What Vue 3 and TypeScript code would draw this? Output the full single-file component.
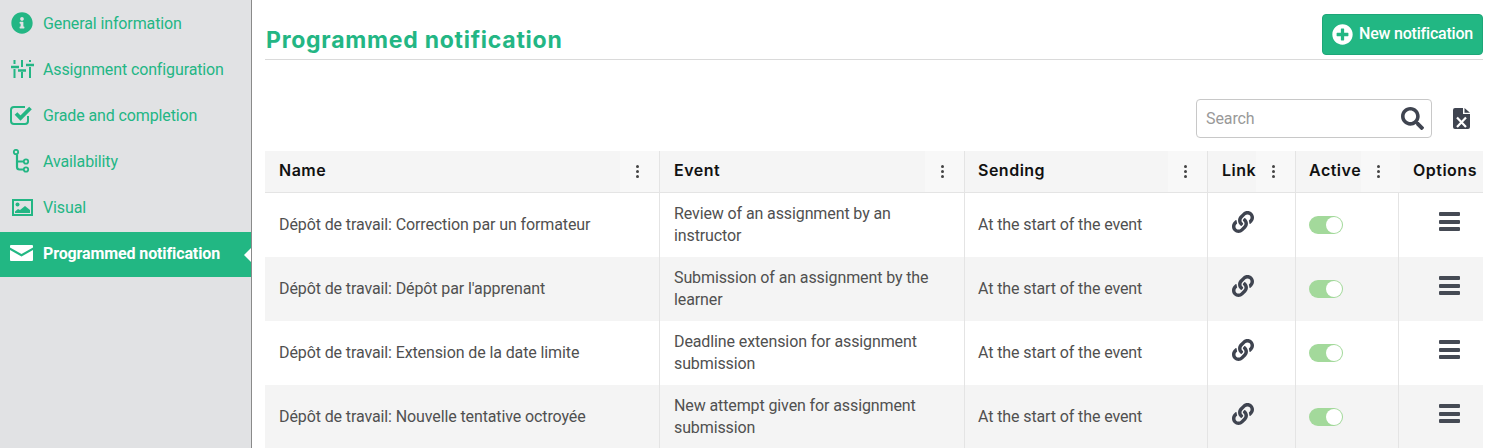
<template>
  <div class="page">
    <aside class="sidebar">
      <a v-for="item in menu" :key="item.label" class="nav-item" :class="{ active: item.active }">
        <span class="nav-icon">
          <svg v-if="item.icon === 'info'" width="22" height="22" viewBox="0 0 512 512"><path fill="currentColor" d="M256 8C119.043 8 8 119.083 8 256c0 136.997 111.043 248 248 248s248-111.003 248-248C504 119.083 392.957 8 256 8zm0 110c23.196 0 42 18.804 42 42s-18.804 42-42 42-42-18.804-42-42 18.804-42 42-42zm56 254c0 6.627-5.373 12-12 12h-88c-6.627 0-12-5.373-12-12v-24c0-6.627 5.373-12 12-12h12v-64h-12c-6.627 0-12-5.373-12-12v-24c0-6.627 5.373-12 12-12h64c6.627 0 12 5.373 12 12v100h12c6.627 0 12 5.373 12 12v24z" /></svg>
          <svg v-else-if="item.icon === 'sliders'" width="24" height="18" viewBox="0 0 24 18" fill="none" stroke="currentColor"><path stroke-width="2" d="M3.5 0v4M3.5 9v9M11 0v7M11 12v6M19 0v2M19 7v11" /><path stroke-width="2.5" d="M0 7h8M7 10.5h8M15 5h8" /></svg>
          <svg v-else-if="item.icon === 'check'" class="shift-left" width="23" height="20" viewBox="0 0 23 20" fill="none" stroke="currentColor"><path stroke-width="2" d="M18 11v5a3 3 0 0 1-3 3H4a3 3 0 0 1-3-3V5a3 3 0 0 1 3-3h11" /><path stroke-width="3.8" d="M6 8.5l4.5 4.5 10-10" /></svg>
          <svg v-else-if="item.icon === 'branch'" class="shift-right" width="18" height="24" viewBox="0 0 18 24" fill="none" stroke="currentColor"><g stroke-width="1.8"><circle cx="4" cy="3" r="2.2" /><circle cx="14" cy="12.5" r="2.2" /><circle cx="14" cy="20.5" r="2.2" /></g><path stroke-width="2.2" d="M5 5.5v12.500a2.5 2.5 0 0 0 2.5 2.5h4M5 12.5h6.500" /></svg>
          <svg v-else-if="item.icon === 'image'" class="shift-right" width="21" height="17" viewBox="0 0 21 17"><rect x="1" y="1" width="19" height="15" fill="none" stroke="currentColor" stroke-width="2" /><circle cx="5.5" cy="5.5" r="2" fill="currentColor" /><path fill="currentColor" d="M3 14v-1.500l3-2.500 2 1 5-4 5 4v3z" /></svg>
          <svg v-else class="shift-left" width="23" height="16" viewBox="0 0 23 16"><path fill="currentColor" d="M1 0h21a1 1 0 0 1 1 1v1.500l-11.500 6.500L0 2.500V1a1 1 0 0 1 1-1zM0 5l11.500 6.500L23 5v10a1 1 0 0 1-1 1H1a1 1 0 0 1-1-1z" /></svg>
        </span>
        <span>{{ item.label }}</span>
      </a>
    </aside>

    <main class="main">
      <header class="title-bar">
        <h1>Programmed notification</h1>
        <button class="btn-new">
          <svg width="21" height="21" viewBox="0 0 512 512"><path fill="currentColor" d="M256 8C119 8 8 119 8 256s111 248 248 248 248-111 248-248S393 8 256 8zm144 276c0 6.6-5.4 12-12 12h-92v92c0 6.6-5.4 12-12 12h-56c-6.6 0-12-5.4-12-12v-92h-92c-6.6 0-12-5.4-12-12v-56c0-6.6 5.4-12 12-12h92v-92c0-6.6 5.4-12 12-12h56c6.6 0 12 5.4 12 12v92h92c6.6 0 12 5.4 12 12v56z" /></svg>
          <span class="btn-label">New notification</span>
        </button>
      </header>

      <div class="toolbar">
        <div class="search">
          <span class="placeholder">Search</span>
          <svg width="23" height="23" viewBox="0 0 512 512"><path fill="currentColor" d="M505 442.7L405.3 343c-4.5-4.5-10.6-7-17-7H372c27.6-35.3 44-79.7 44-128C416 93.1 322.9 0 208 0S0 93.1 0 208s93.1 208 208 208c48.3 0 92.7-16.4 128-44v16.3c0 6.4 2.5 12.5 7 17l99.7 99.7c9.4 9.4 24.6 9.4 33.9 0l28.3-28.3c9.4-9.4 9.4-24.6.1-34zM208 336c-70.7 0-128-57.2-128-128 0-70.7 57.2-128 128-128 70.7 0 128 57.2 128 128 0 70.7-57.2 128-128 128z" /></svg>
        </div>
        <svg class="excel" width="17" height="21" viewBox="0 0 17 21"><path fill="currentColor" d="M2 0h8v6h7v13a2 2 0 0 1-2 2H2a2 2 0 0 1-2-2V2a2 2 0 0 1 2-2zM11.5 0L17 4.8h-5.5z" /><path stroke="#fff" stroke-width="2.2" d="M4 9.5l9 9.5M13 9.5l-9 9.5" /></svg>
      </div>

      <table class="grid">
        <colgroup>
          <col v-for="w in colWidths" :key="w" :style="{ width: w + 'px' }" />
        </colgroup>
        <thead>
          <tr>
            <th v-for="col in columns" :key="col">
              <div class="th-inner">
                <span class="th-label">{{ col }}</span>
                <span v-if="col !== 'Options'" class="th-menu"><i /><i /><i /></span>
              </div>
            </th>
          </tr>
        </thead>
        <tbody>
          <tr v-for="row in rows" :key="row.name">
            <td>{{ row.name }}</td>
            <td>{{ row.event }}</td>
            <td>At the start of the event</td>
            <td>
              <svg class="link-icon" width="22" height="22" viewBox="0 0 512 512"><path fill="currentColor" d="M326.612 185.391c59.747 59.809 58.927 155.698.36 214.59-.11.12-.24.25-.36.37l-67.2 67.2c-59.27 59.27-155.699 59.262-214.96 0-59.27-59.26-59.27-155.7 0-214.96l37.106-37.106c9.84-9.84 26.786-3.3 27.294 10.606.648 17.722 3.826 35.527 9.69 52.721 1.986 5.822.567 12.262-3.783 16.612l-13.087 13.087c-28.026 28.026-28.905 73.66-1.155 101.96 28.024 28.579 74.086 28.749 102.325.51l67.2-67.19c28.191-28.191 28.073-73.757 0-101.83-3.701-3.694-7.429-6.564-10.341-8.569a16.037 16.037 0 0 1-6.947-12.606c-.396-10.567 3.348-21.456 11.698-29.806l21.054-21.055c5.521-5.521 14.182-6.199 20.584-1.731a152.482 152.482 0 0 1 20.522 17.197zM467.547 44.449c-59.261-59.262-155.69-59.27-214.96 0l-67.2 67.2c-.12.12-.25.25-.36.37-58.566 58.892-59.387 154.781.36 214.59a152.454 152.454 0 0 0 20.521 17.196c6.402 4.468 15.064 3.789 20.584-1.731l21.054-21.055c8.35-8.35 12.094-19.239 11.698-29.806a16.037 16.037 0 0 0-6.947-12.606c-2.912-2.005-6.64-4.875-10.341-8.569-28.073-28.073-28.191-73.639 0-101.83l67.2-67.19c28.239-28.239 74.3-28.069 102.325.51 27.75 28.3 26.872 73.934-1.155 101.96l-13.087 13.087c-4.35 4.35-5.769 10.79-3.783 16.612 5.864 17.194 9.042 34.999 9.69 52.721.509 13.906 17.454 20.446 27.294 10.606l37.106-37.106c59.271-59.259 59.271-155.699.001-214.959z" /></svg>
            </td>
            <td><span class="toggle"><span class="knob" /></span></td>
            <td>
              <span class="bars"><i /><i /><i /></span>
            </td>
          </tr>
        </tbody>
      </table>
    </main>
  </div>
</template>

<script setup lang="ts">
const menu = [
  { label: 'General information', icon: 'info' },
  { label: 'Assignment configuration', icon: 'sliders' },
  { label: 'Grade and completion', icon: 'check' },
  { label: 'Availability', icon: 'branch' },
  { label: 'Visual', icon: 'image' },
  { label: 'Programmed notification', icon: 'mail', active: true },
]

const columns = ['Name', 'Event', 'Sending', 'Link', 'Active', 'Options']
const colWidths = [395, 305, 243, 88, 103, 84]

const rows = [
  { name: 'Dépôt de travail: Correction par un formateur', event: 'Review of an assignment by an instructor' },
  { name: "Dépôt de travail: Dépôt par l'apprenant", event: 'Submission of an assignment by the learner' },
  { name: 'Dépôt de travail: Extension de la date limite', event: 'Deadline extension for assignment submission' },
  { name: 'Dépôt de travail: Nouvelle tentative octroyée', event: 'New attempt given for assignment submission' },
]
</script>

<style>
html,
body {
  margin: 0;
  background: #fff;
  overflow: hidden;
}
</style>

<style scoped>
.page {
  display: flex;
  height: 448px;
  overflow: hidden;
  font-family: Roboto, "Liberation Sans", sans-serif;
  color: #505050;
}
.sidebar {
  width: 251px;
  flex: none;
  background: #e1e2e4;
  border-right: 1px solid #8a8a8a;
}
.nav-item {
  position: relative;
  display: flex;
  align-items: center;
  height: 46px;
  color: #23b684;
  font-size: 16px;
  letter-spacing: -0.12px;
}
.nav-icon {
  width: 43px;
  padding-left: 11px;
  box-sizing: border-box;
  flex: none;
  display: flex;
  align-items: center;
}
.shift-left {
  margin-left: -1px;
}
.shift-right {
  margin-left: 1px;
}
.nav-item.active {
  box-sizing: border-box;
  height: 45px;
  margin-top: 2px;
  padding-bottom: 3px;
  background: #22b783;
  color: #fff;
  font-weight: 700;
}
.nav-item.active::after {
  content: "";
  position: absolute;
  right: 0;
  top: 16px;
  border: 7px solid transparent;
  border-right-color: #fff;
  border-left-width: 0;
}
.main {
  flex: 1;
  min-width: 0;
  padding: 0 5px 0 13px;
}
.title-bar {
  height: 59px;
  border-bottom: 1px solid #dadada;
  display: flex;
  justify-content: space-between;
  align-items: flex-start;
}
.title-bar h1 {
  margin: 26px 0 0 1px;
  font-family: Inter, "Liberation Sans", sans-serif;
  font-size: 23px;
  line-height: 28px;
  font-weight: 700;
  letter-spacing: 0.75px;
  color: #23b684;
}
.btn-new {
  margin-top: 14px;
  width: 161px;
  height: 41px;
  display: flex;
  align-items: center;
  gap: 6px;
  padding: 0 0 0 9px;
  border: 1px solid #1ea678;
  border-radius: 4px;
  background: #22b783;
  color: #fff;
  font-family: Roboto, sans-serif;
  font-size: 16px;
  font-weight: 500;
  letter-spacing: -0.2px;
}
.btn-label {
  padding-bottom: 2px;
}
.toolbar {
  display: flex;
  justify-content: flex-end;
  align-items: center;
  height: 39px;
  margin-top: 39px;
  padding-right: 13px;
  gap: 21px;
}
.search {
  width: 236px;
  height: 39px;
  box-sizing: border-box;
  border: 1px solid #c8c8c8;
  border-radius: 4px;
  display: flex;
  align-items: center;
  justify-content: space-between;
  padding: 0 7px 0 9px;
  color: #3f4450;
}
.placeholder {
  color: #999;
  font-size: 16px;
  letter-spacing: -0.1px;
}
.excel {
  color: #3f4450;
}
.grid {
  margin-top: 13px;
  width: 1218px;
  table-layout: fixed;
  border-collapse: separate;
  border-spacing: 0;
  font-size: 16px;
  line-height: 22px;
  letter-spacing: -0.11px;
}
th {
  height: 41px;
  padding: 0;
  background: #f5f5f5;
  border-bottom: 1px solid #e4e4e4;
  border-right: 1px solid #e4e4e4;
  font-family: Inter, "Liberation Sans", sans-serif;
  font-size: 16px;
  font-weight: 600;
  letter-spacing: 0.5px;
  color: #111;
  text-align: left;
}
th:last-child,
td:last-child {
  border-right: none;
}
.th-inner {
  display: flex;
  height: 41px;
  align-items: center;
  justify-content: space-between;
  padding-left: 14px;
}
th:nth-child(3) .th-inner,
th:nth-child(5) .th-inner {
  padding-left: 13px;
}
.th-label {
  padding-bottom: 4px;
}
.th-menu {
  width: 39px;
  height: 41px;
  flex: none;
  box-sizing: border-box;
  padding-right: 4px;
  background: #f8f8f8;
  display: flex;
  flex-direction: column;
  align-items: center;
  justify-content: center;
  gap: 2px;
}
.th-menu i {
  width: 3px;
  height: 3px;
  border-radius: 50%;
  background: #444;
}
td {
  height: 64px;
  box-sizing: border-box;
  padding: 0 14px;
  border-right: 1px solid #e4e4e4;
  color: #505050;
}
td:nth-child(3),
td:nth-child(5) {
  padding-left: 13px;
}
td:nth-child(4) {
  padding: 0 0 0 24px;
}
td:nth-child(6) {
  padding: 0 0 0 40px;
}
tbody tr:nth-child(even) td {
  background: #f4f4f4;
}
.link-icon {
  display: block;
  margin-top: -7px;
  color: #3f4450;
}
.toggle {
  display: block;
  width: 34px;
  height: 18px;
  box-sizing: border-box;
  background: #a3d99b;
  border-radius: 9px;
  position: relative;
}
.knob {
  position: absolute;
  right: 1px;
  top: 1px;
  width: 16px;
  height: 16px;
  border-radius: 50%;
  background: #fff;
}
.bars {
  display: flex;
  flex-direction: column;
  gap: 3.5px;
  width: 21px;
  margin-top: -7px;
}
.bars i {
  height: 4px;
  border-radius: 1px;
  background: #454a54;
}
</style>
